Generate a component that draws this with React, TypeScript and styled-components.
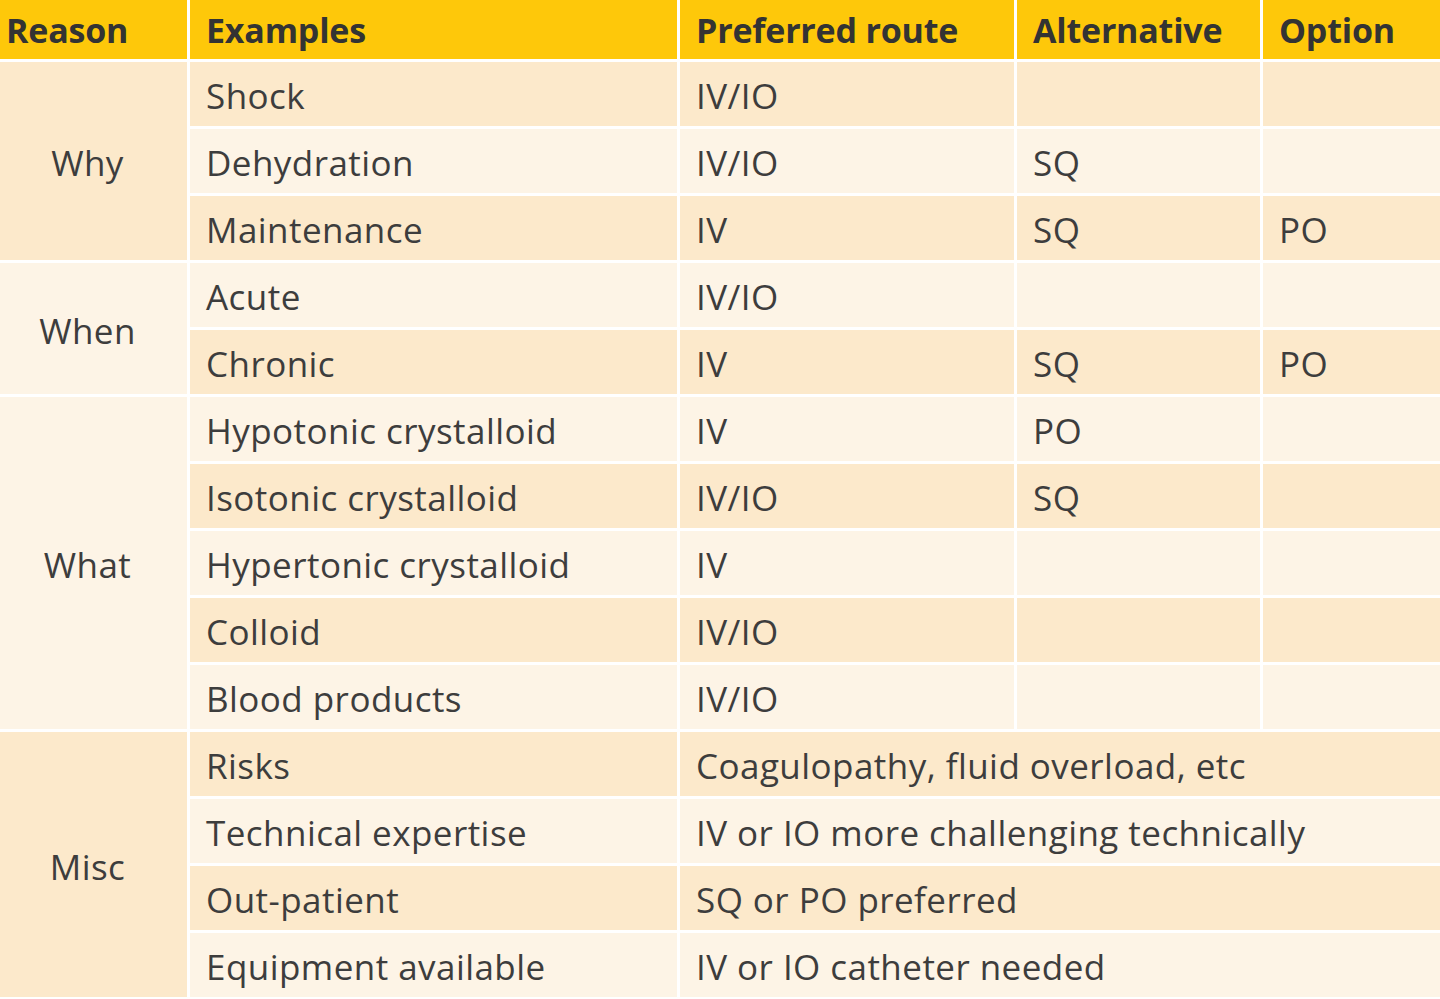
import React from "react";
import styled, { createGlobalStyle } from "styled-components";

const Global = createGlobalStyle`
  html, body { margin: 0; padding: 0; background: #ffffff; }
  body { font-family: "Open Sans", Lato, sans-serif; }
`;

const DARK = "#fce9cb";
const LIGHT = "#fdf4e6";

const Table = styled.div`
  display: grid;
  grid-template-columns: 187px 487px 334px 243px 1fr;
  grid-template-rows: 59px repeat(14, 64px);
  column-gap: 3px;
  row-gap: 3px;
  width: 1440px;
  height: 999px;
  background: #ffffff;
  font-family: "Open Sans", Lato, sans-serif;
  color: #3d3d3d;
`;

const Head = styled.div<{ $pad?: number }>`
  background: #fec80a;
  font-weight: 700;
  font-size: 34px;
  letter-spacing: -0.2px;
  color: #333333;
  display: flex;
  align-items: center;
  padding-left: ${(p) => p.$pad ?? 16}px;
`;

const Cell = styled.div<{ $dark: boolean; $span?: number; $center?: boolean; $rows?: number }>`
  background: ${(p) => (p.$dark ? DARK : LIGHT)};
  font-size: 35px;
  letter-spacing: 0.45px;
  display: flex;
  align-items: center;
  justify-content: ${(p) => (p.$center ? "center" : "flex-start")};
  padding-left: ${(p) => (p.$center ? 0 : 16)}px;
  padding-right: ${(p) => (p.$center ? 12 : 0)}px;
  padding-top: 3px;
  grid-column: ${(p) => (p.$span ? `span ${p.$span}` : "auto")};
  grid-row: ${(p) => (p.$rows ? `span ${p.$rows}` : "auto")};
  white-space: nowrap;
`;

type Row = { ex: string; cols: string[]; span?: boolean };
type Group = { reason: string; dark: boolean; rows: Row[] };

const groups: Group[] = [
  {
    reason: "Why",
    dark: true,
    rows: [
      { ex: "Shock", cols: ["IV/IO", "", ""] },
      { ex: "Dehydration", cols: ["IV/IO", "SQ", ""] },
      { ex: "Maintenance", cols: ["IV", "SQ", "PO"] },
    ],
  },
  {
    reason: "When",
    dark: false,
    rows: [
      { ex: "Acute", cols: ["IV/IO", "", ""] },
      { ex: "Chronic", cols: ["IV", "SQ", "PO"] },
    ],
  },
  {
    reason: "What",
    dark: false,
    rows: [
      { ex: "Hypotonic crystalloid", cols: ["IV", "PO", ""] },
      { ex: "Isotonic crystalloid", cols: ["IV/IO", "SQ", ""] },
      { ex: "Hypertonic crystalloid", cols: ["IV", "", ""] },
      { ex: "Colloid", cols: ["IV/IO", "", ""] },
      { ex: "Blood products", cols: ["IV/IO", "", ""] },
    ],
  },
  {
    reason: "Misc",
    dark: true,
    rows: [
      { ex: "Risks", cols: ["Coagulopathy, fluid overload, etc"], span: true },
      { ex: "Technical expertise", cols: ["IV or IO more challenging technically"], span: true },
      { ex: "Out-patient", cols: ["SQ or PO preferred"], span: true },
      { ex: "Equipment available", cols: ["IV or IO catheter needed"], span: true },
    ],
  },
];

export default function App() {
  let idx = 0;
  const cells: React.ReactNode[] = [];
  groups.forEach((g) => {
    g.rows.forEach((r, i) => {
      const dark = idx % 2 === 0;
      idx++;
      if (i === 0) {
        cells.push(
          <Cell key={`r-${g.reason}`} $dark={g.dark} $center $rows={g.rows.length}>
            {g.reason}
          </Cell>
        );
      }
      cells.push(
        <Cell key={`e-${r.ex}`} $dark={dark}>
          {r.ex}
        </Cell>
      );
      if (r.span) {
        cells.push(
          <Cell key={`s-${r.ex}`} $dark={dark} $span={3}>
            {r.cols[0]}
          </Cell>
        );
      } else {
        r.cols.forEach((c, j) => {
          cells.push(
            <Cell key={`c-${r.ex}-${j}`} $dark={dark}>
              {c}
            </Cell>
          );
        });
      }
    });
  });

  return (
    <>
      <Global />
      <Table>
        <Head $pad={6}>Reason</Head>
        <Head>Examples</Head>
        <Head>Preferred route</Head>
        <Head>Alternative</Head>
        <Head>Option</Head>
        {cells}
      </Table>
    </>
  );
}
